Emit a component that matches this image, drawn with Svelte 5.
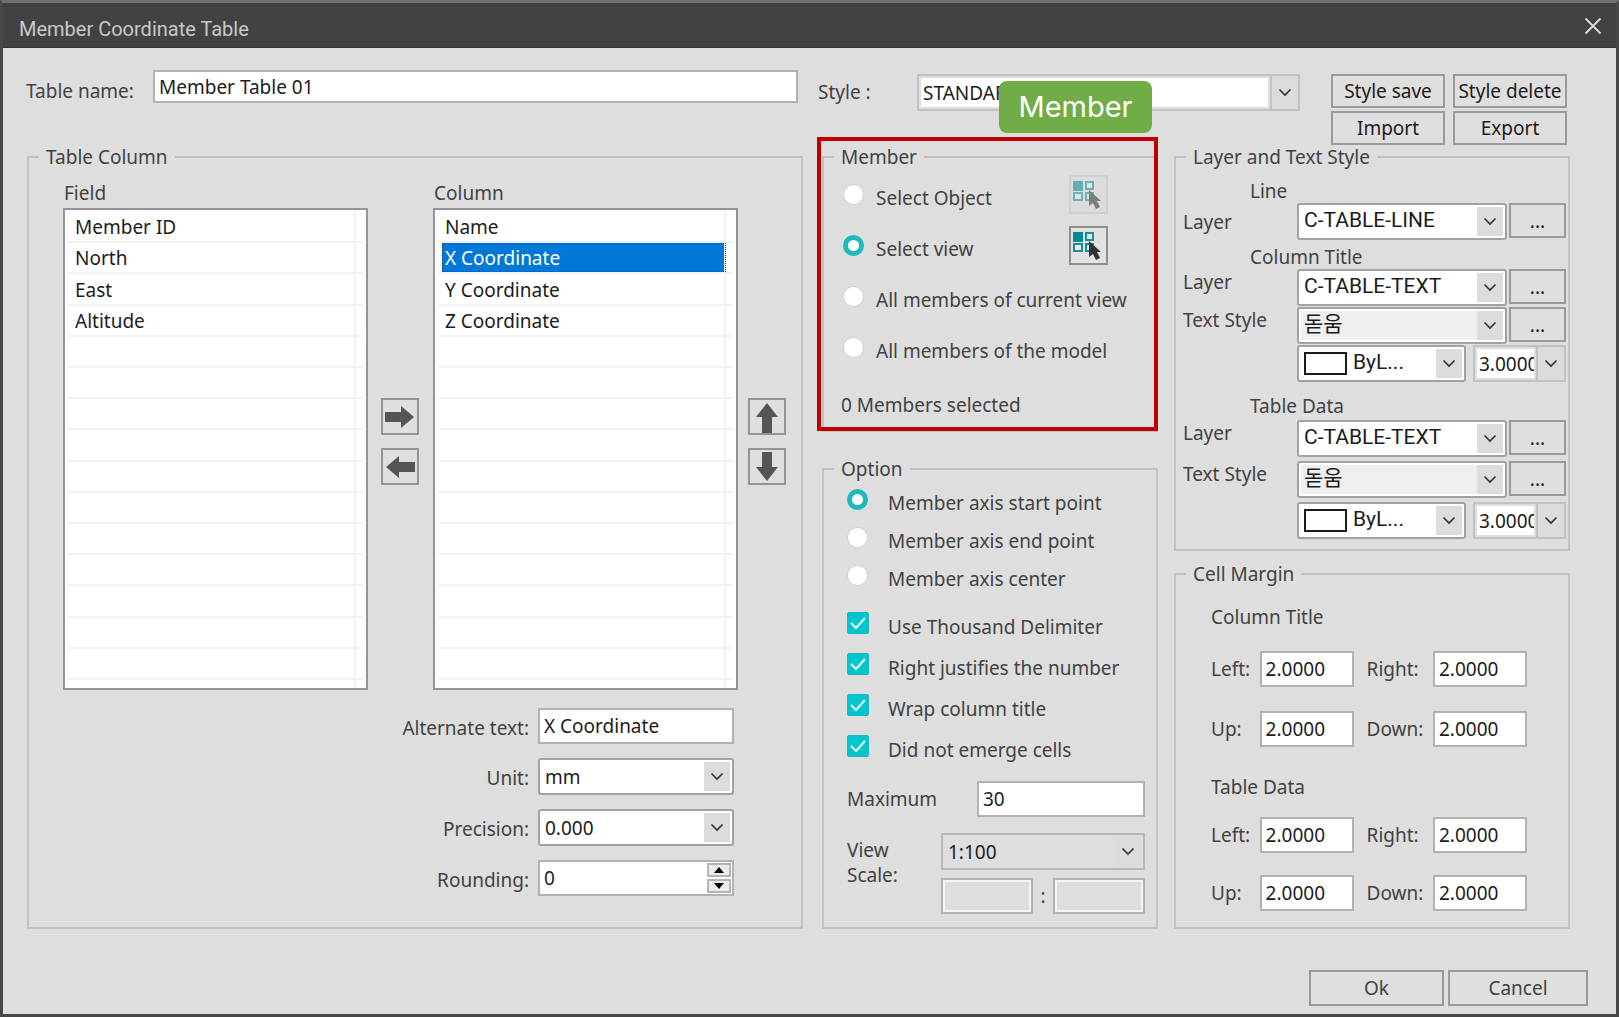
<script>
  const fields = ['Member ID', 'North', 'East', 'Altitude'];
  const columns = ['Name', 'X Coordinate', 'Y Coordinate', 'Z Coordinate'];
  const rowCount = 15;
  const pad = (items) => Array.from({ length: rowCount }, (_, i) => items[i] ?? '');

  let selected = $state('X Coordinate');
  let memberMode = $state('view');
  let axis = $state('start');

  const axisModes = [
    ['start', 'Member axis start point'],
    ['end', 'Member axis end point'],
    ['center', 'Member axis center'],
  ];
  const checks = $state([
    { label: 'Use Thousand Delimiter', on: true },
    { label: 'Right justifies the number', on: true },
    { label: 'Wrap column title', on: true },
    { label: 'Did not emerge cells', on: true },
  ]);
  const margins = [
    { title: 'Column Title', id: 'mc', rows: [['Left:', 'Right:'], ['Up:', 'Down:']] },
    { title: 'Table Data', id: 'md', rows: [['Left:', 'Right:'], ['Up:', 'Down:']] },
  ];
</script>

{#snippet chevron()}
  <span class="drop" aria-hidden="true">
    <svg width="14" height="9" viewBox="0 0 14 9"><path d="M1.5 1.5 7 7l5.5-5.5" fill="none" stroke="#333" stroke-width="1.6" /></svg>
  </span>
{/snippet}

{#snippet combo(id, value, label, kind)}
  <span class="combo {kind}">
    <select {id} aria-label={label}><option>{value}</option></select>
    {#if kind.includes('swatched')}<span class="swatch"></span>{/if}
    {@render chevron()}
  </span>
{/snippet}

{#snippet arrow(label, d)}
  <button class="arrow" type="button" aria-label={label}>
    <svg width="34" height="32" viewBox="0 0 34 32"><path {d} fill="#555" /></svg>
  </button>
{/snippet}

{#snippet pick(label, off)}
  <button class="pick" class:off type="button" aria-label={label} disabled={off}>
    <svg width="35" height="35" viewBox="0 0 35 35">
      <rect x="2" y="4" width="10" height="10" fill="#028a9b" />
      <g fill="#d8f6f8" stroke="#1a8b9b" stroke-width="2">
        <rect x="15" y="5" width="7" height="7" />
        <rect x="3" y="16" width="8" height="7" fill="#e8ecec" />
        <rect x="15" y="16" width="7" height="7" />
      </g>
      <path d="M18 13v16l4-3 3 6 4-2-3-6h4z" fill="#333" />
    </svg>
  </button>
{/snippet}

{#snippet list(id, items)}
  <ul class="list" {id} role="listbox" aria-labelledby="{id}-title">
    {#each pad(items) as item}
      <li>
        <button
          class="cell"
          class:picked={item && item === selected}
          type="button"
          role="option"
          aria-selected={!!item && item === selected}
          tabindex={item ? 0 : -1}
          onclick={() => item && (selected = item)}>{item}</button>
      </li>
    {/each}
    <li class="rest" role="presentation"><span class="cell"></span></li>
  </ul>
{/snippet}

{#snippet textRows(group)}
  <div class="line">
    <label for="{group}-layer">Layer</label>
    {@render combo(`${group}-layer`, 'C-TABLE-TEXT', null, 'thin')}
    <button class="more" type="button" aria-label="Browse layers">...</button>
  </div>
  <div class="line">
    <label for="{group}-style">Text Style</label>
    {@render combo(`${group}-style`, '돋움', null, 'thin shaded')}
    <button class="more" type="button" aria-label="Browse text styles">...</button>
  </div>
  <div class="line">
    <span></span>
    <div class="pair">
      {@render combo(`${group}-color`, 'ByL...', 'Colour', 'thin swatched')}
      {@render combo(`${group}-size`, '3.0000', 'Text size', 'flat size')}
    </div>
  </div>
{/snippet}

<main class="window">
  <header class="bar">
    <h1>Member Coordinate Table</h1>
    <button class="close" type="button" aria-label="Close">
      <svg width="18" height="18" viewBox="0 0 18 18"><path d="M1.5 1.5l15 15M16.5 1.5l-15 15" stroke="#dcdcdc" stroke-width="1.8" /></svg>
    </button>
  </header>

  <form onsubmit={(e) => e.preventDefault()}>
    <div class="top">
      <div class="name">
        <label for="table-name">Table name:</label>
        <input id="table-name" type="text" value="Member Table 01" />
      </div>
      <div class="style">
        <label for="style">Style :</label>
        {@render combo('style', 'STANDARD', null, 'flat')}
      </div>
      <div class="actions">
        <button type="button">Style save</button>
        <button type="button">Style delete</button>
        <button type="button">Import</button>
        <button type="button">Export</button>
      </div>
    </div>

    <div class="body">
      <fieldset class="table-column">
        <legend>Table Column</legend>
        <div class="lists">
          <div class="stack">
            <span id="field-title">Field</span>
            {@render list('field', fields)}
          </div>
          <div class="arrows">
            {@render arrow('Add to columns', 'M2 11h16V5l13 11-13 11v-6H2z')}
            {@render arrow('Remove from columns', 'M32 11H16V5L3 16l13 11v-6h16z')}
          </div>
          <div class="stack">
            <span id="column-title">Column</span>
            {@render list('column', columns)}
          </div>
          <div class="arrows">
            {@render arrow('Move up', 'M12 32V16H6L17 2l11 14h-6v16z')}
            {@render arrow('Move down', 'M12 1v15H6l11 14 11-14h-6V1z')}
          </div>
        </div>
        <div class="details">
          <label for="alt">Alternate text:</label>
          <input id="alt" type="text" value="X Coordinate" />
          <label for="unit">Unit:</label>
          {@render combo('unit', 'mm', null, '')}
          <label for="precision">Precision:</label>
          {@render combo('precision', '0.000', null, '')}
          <label for="rounding">Rounding:</label>
          <span class="spin">
            <input id="rounding" type="text" inputmode="numeric" value="0" />
            <span class="steps">
              <button type="button" aria-label="Increase"><svg width="10" height="6" viewBox="0 0 10 6"><path d="M5 0l5 6H0z" /></svg></button>
              <button type="button" aria-label="Decrease"><svg width="10" height="6" viewBox="0 0 10 6"><path d="M5 6L0 0h10z" /></svg></button>
            </span>
          </span>
        </div>
      </fieldset>

      <div class="middle">
        <div class="member-area">
          <fieldset class="member">
            <legend>Member</legend>
            <div class="modes">
              <label><input type="radio" name="member" value="object" bind:group={memberMode} /><span>Select Object</span></label>
              {@render pick('Pick objects', true)}
              <label><input type="radio" name="member" value="view" bind:group={memberMode} /><span>Select view</span></label>
              {@render pick('Pick views', false)}
              <label class="full"><input type="radio" name="member" value="current" bind:group={memberMode} /><span>All members of current view</span></label>
              <label class="full"><input type="radio" name="member" value="model" bind:group={memberMode} /><span>All members of the model</span></label>
            </div>
            <p>0 Members selected</p>
          </fieldset>
          <div class="highlight"></div>
          <div class="tag">Member</div>
        </div>

        <fieldset class="option">
          <legend>Option</legend>
          <div class="axes">
            {#each axisModes as [value, text]}
              <label><input type="radio" name="axis" {value} bind:group={axis} /><span>{text}</span></label>
            {/each}
          </div>
          <div class="checks">
            {#each checks as check}
              <label>
                <span class="tick">
                  <input type="checkbox" bind:checked={check.on} />
                  {#if check.on}<svg width="22" height="22" viewBox="0 0 22 22" aria-hidden="true"><path d="M4 11l5 5 9-10" fill="none" stroke="#e4ffff" stroke-width="2.2" /></svg>{/if}
                </span>
                <span>{check.label}</span>
              </label>
            {/each}
          </div>
          <div class="maximum">
            <label for="maximum">Maximum</label>
            <input id="maximum" type="text" value="30" />
          </div>
          <div class="scale">
            <label for="scale">View Scale:</label>
            <div class="scale-boxes">
              {@render combo('scale', '1:100', null, 'plain')}
              <div class="ratio">
                <input type="text" disabled aria-label="Scale numerator" />
                <span>:</span>
                <input type="text" disabled aria-label="Scale denominator" />
              </div>
            </div>
          </div>
        </fieldset>
      </div>

      <div class="right">
        <fieldset class="layers">
          <legend>Layer and Text Style</legend>
          <h2>Line</h2>
          <div class="line first">
            <label for="line-layer">Layer</label>
            {@render combo('line-layer', 'C-TABLE-LINE', null, 'thin')}
            <button class="more" type="button" aria-label="Browse layers">...</button>
          </div>
          <h2 class="second">Column Title</h2>
          <div class="rows">{@render textRows('title')}</div>
          <h2 class="third">Table Data</h2>
          <div class="rows loose">{@render textRows('data')}</div>
        </fieldset>

        <fieldset class="margin">
          <legend>Cell Margin</legend>
          {#each margins as group}
            <section>
              <h2>{group.title}</h2>
              <div class="margin-grid">
                {#each group.rows as row, r}
                  {#each row as text, c}
                    <label for="{group.id}{r}{c}">{text}</label>
                    <input id="{group.id}{r}{c}" type="text" value="2.0000" />
                  {/each}
                {/each}
              </div>
            </section>
          {/each}
        </fieldset>
      </div>
    </div>
  </form>

  <footer>
    <button class="ok" type="button">Ok</button>
    <button class="cancel" type="button">Cancel</button>
  </footer>
</main>

<style>
  :global(body) { background: #dedede; }
  .window, .window * { box-sizing: border-box; }
  .window {
    min-height: 100vh;
    display: flex;
    flex-direction: column;
    border: 3px solid #484848;
    border-top-color: #6e7270;
    background: #dedede;
    color: #424242;
    font: 19px/24px 'Noto Sans', 'Noto Sans CJK KR', sans-serif;
  }
  button, input, select { font: inherit; color: #1c1c1c; border-radius: 0; margin: 0; }
  button { padding: 0; background: #dfdfdf; border: 2px solid #9a9a9a; }
  input[type='text'] {
    width: 100%;
    min-width: 0;
    height: 36px;
    padding: 0 4px;
    border: 2px solid #b2b2b6;
    background: #fff;
  }
  h1, h2, p, ul { margin: 0; padding: 0; font-weight: 400; list-style: none; }
  h2 { font-size: inherit; }

  .bar {
    display: flex;
    align-items: center;
    justify-content: space-between;
    height: 45px;
    padding: 7px 14px 0 16px;
    background: #424242;
    border-bottom: 1px solid #333;
    color: #c8c8c8;
  }
  h1 { font: 400 20px/24px Roboto, sans-serif; }
  .close { display: grid; padding: 0; margin-bottom: 6px; border: 0; background: none; }

  .top, .body {
    display: grid;
    column-gap: 16px;
    padding: 0 46px 0 24px;
  }
  .top { grid-template-columns: minmax(0, 776fr) minmax(0, 497fr) 239px; height: 97px; padding-left: 23px; }
  .body { grid-template-columns: minmax(0, 776fr) minmax(0, 339fr) minmax(0, 396fr); }
  .name { display: flex; align-items: flex-start; padding-top: 22px; }
  .name label { flex: 0 0 127px; margin-top: 9px; }
  .name input { height: 33px; margin-right: 4px; }
  .style { display: flex; align-items: flex-start; padding: 26px 15px 0 0; white-space: nowrap; }
  .style label { flex: 0 0 99px; margin-top: 6px; }
  .style .combo { flex: 1; }
  .actions {
    display: grid;
    grid-template-columns: 1fr 1fr;
    gap: 3px 8px;
    align-content: start;
    padding: 26px 3px 0 0;
  }
  .actions button { height: 34px; white-space: nowrap; }

  fieldset { min-width: 0; margin: 0; padding: 0; border: 2px solid #c2c2c2; }
  legend { margin-left: 10px; padding: 0 7px; line-height: 24px; }

  .combo {
    display: grid;
    grid-template-columns: minmax(0, 1fr) auto;
    height: 37px;
    min-width: 0;
    border: 2px solid #a2a2a2;
    border-radius: 3px;
    background: #fff;
  }
  .combo select {
    grid-area: 1 / 1 / 2 / 3;
    width: 100%;
    min-width: 0;
    padding: 0 28px 0 5px;
    appearance: none;
    border: 0;
    background: none;
  }
  .drop {
    grid-area: 1 / 2;
    display: grid;
    place-items: center;
    width: 26px;
    margin: 2px;
    background: #dcdcdc;
    pointer-events: none;
  }
  .thin select { font-family: Roboto, 'Noto Sans CJK KR', sans-serif; font-size: 21px; font-weight: 400; padding-bottom: 4px; }
  .shaded { background: #efefef; box-shadow: inset 0 0 0 2px #fff; }
  .flat { border-color: #c2c2c2; border-radius: 0; background: #dedede; }
  .flat select { grid-area: 1 / 1; margin: 2px; padding: 0 0 0 2px; width: auto; background: #fff; }
  .flat .drop { width: 28px; margin: 0; border-left: 2px solid #c2c2c2; }
  .plain { border-color: #b8b8b8; border-radius: 0; background: #dedede; }
  .swatched select { padding-left: 54px; }
  .swatch {
    grid-area: 1 / 1;
    align-self: center;
    width: 43px;
    height: 23px;
    margin-left: 5px;
    border: 2px solid #1c1c1c;
    background: #fff;
    pointer-events: none;
  }

  .lists { display: grid; grid-template-columns: minmax(0, 305fr) 65px minmax(0, 305fr) 60px; padding: 13px 3px 0 34px; }
  .stack { display: flex; flex-direction: column; }
  .stack > span { height: 26px; line-height: 22px; padding-left: 1px; }
  .list {
    display: flex;
    flex-direction: column;
    height: 482px;
    padding: 2px 3px 1px;
    border: 2px solid #94949a;
    background: #fff;
    color: #1c1c1c;
  }
  li { flex: 1; display: flex; border-bottom: 2px solid #f1f1f1; padding-right: 7px; }
  .rest { flex: 0 0 7px; border: 0; }
  .cell {
    flex: 1;
    padding: 1px 0 0 7px;
    border: 0;
    border-right: 2px solid #f1f1f1;
    background: none;
    text-align: left;
    line-height: 24px;
  }
  #column .cell { margin-left: 4px; padding-left: 3px; }
  #column .picked { background: #0078d7; color: #fff; outline: 1px dotted #444; outline-offset: -1px; }
  .arrows { display: flex; flex-direction: column; align-items: center; gap: 13px; padding: 216px 2px 0 0; }
  .arrow { display: grid; place-items: center; width: 38px; height: 37px; border-color: #949494; }

  .details {
    display: grid;
    grid-template-columns: 1fr 196px;
    gap: 14px 9px;
    align-items: center;
    justify-items: end;
    padding: 18px 67px 29px 0;
  }
  .details > :nth-child(even) { width: 100%; }
  .details label { padding-top: 3px; }
  .spin { display: flex; height: 36px; border: 2px solid #b2b2b6; background: #fff; }
  .spin input[type='text'] { height: 32px; border: 0; }
  .steps { display: grid; grid-template-rows: 14px 14px; gap: 2px; align-content: center; margin-right: 1px; }
  .steps button { display: grid; place-items: center; width: 24px; border: 2px solid #b4b4b4; background: #ececec; }

  .middle { display: flex; flex-direction: column; gap: 25px; padding-left: 3px; }
  .member-area { position: relative; }
  .member { height: 287px; }
  .highlight {
    position: absolute;
    inset: -8px 0 1px -5px;
    border: 4px solid #c00000;
    pointer-events: none;
  }
  .tag {
    position: absolute;
    top: -64px;
    right: 6px;
    width: 153px;
    border-radius: 8px;
    background: #70ad47;
    color: #fff;
    font: 29px/52px Inter, sans-serif;
    text-align: center;
  }
  input[type='radio'] {
    appearance: none;
    flex: none;
    width: 21px;
    height: 21px;
    border: 1px solid #cfcfcf;
    border-radius: 50%;
    background: #fff;
  }
  input[type='radio']:checked { border: 5px solid #1fb9bd; }
  .modes label, .axes label, .checks label { display: flex; align-items: flex-start; white-space: nowrap; }
  .modes {
    display: grid;
    grid-template-columns: 1fr 39px;
    grid-auto-rows: 39px;
    row-gap: 12px;
    padding: 6px 48px 0 19px;
  }
  .modes label { gap: 12px; padding-top: 9px; }
  .modes span { padding-top: 2px; }
  .modes .full { grid-column: 1 / 3; }
  .pick { display: grid; place-items: center; width: 39px; height: 39px; border-color: #8e8e8e; background: #e2e2e2; }
  .pick.off { border-color: #d0d0d0; background: #dcdcdc; }
  .pick.off svg { opacity: 0.55; }
  .member p { padding: 26px 0 0 17px; }

  .axes { display: grid; gap: 14px; padding: 8px 0 0 23px; }
  .axes label { gap: 20px; height: 24px; }
  .axes label span { padding-top: 2px; }
  .checks { display: grid; gap: 17px; padding: 23px 0 0 23px; }
  .checks label { gap: 19px; height: 24px; }
  .checks label > span:last-child { padding-top: 3px; }
  .tick { display: grid; flex: none; width: 22px; height: 22px; }
  .tick > * { grid-area: 1 / 1; pointer-events: none; }
  .tick input { appearance: none; width: 22px; height: 22px; border-radius: 2px; background: #fff; border: 1px solid #bbb; }
  .tick input:checked { background: #02c5cd; border-color: #1cb7be; }
  .maximum { display: grid; grid-template-columns: 1fr 168px; align-items: center; padding: 22px 11px 0 23px; }
  .scale { display: grid; grid-template-columns: 1fr 204px; padding: 16px 11px 13px 23px; }
  .scale label { width: 60px; padding-top: 5px; line-height: 25px; }
  .scale-boxes { display: grid; gap: 8px; }
  .ratio { display: grid; grid-template-columns: 1fr 20px 1fr; align-items: center; text-align: center; }
  .ratio input[type='text'] { background: #dedede; box-shadow: inset 0 0 0 2px #f4f4f4; }

  .right { display: flex; flex-direction: column; gap: 11px; }
  .layers { padding-bottom: 10px; }
  .layers h2 { padding: 10px 0 0 74px; }
  .layers .second { padding-top: 3px; }
  .layers .third { padding: 12px 0 2px 74px; }
  .line { display: grid; grid-template-columns: 1fr 210px 57px; gap: 2px; padding: 0 2px 0 7px; }
  .line label { line-height: 26px; white-space: nowrap; }
  .line.first label { line-height: 39px; }
  .line .pair { grid-column: 2 / 4; display: grid; grid-template-columns: 169px 93px; justify-content: space-between; }
  .rows { display: grid; gap: 1px; }
  .loose { gap: 4px; }
  .more { height: 35px; line-height: 32px; }
  .size select { overflow: hidden; text-overflow: clip; }

  .margin { padding-bottom: 16px; }
  .margin section { padding: 19px 41px 0 35px; }
  .margin section + section { padding-top: 28px; }
  .margin-grid {
    display: grid;
    grid-template-columns: 49fr 94px 80fr 94px;
    row-gap: 24px;
    align-items: center;
    padding-top: 22px;
  }
  section + section .margin-grid { row-gap: 22px; padding-top: 18px; }
  .margin-grid label:nth-of-type(even) { padding-left: 13px; }

  footer { display: flex; justify-content: flex-end; gap: 4px; padding: 39px 28px 8px 0; margin-top: auto; }
  footer button { height: 36px; color: #424242; }
  .ok { width: 135px; }
  .cancel { width: 140px; }
</style>
